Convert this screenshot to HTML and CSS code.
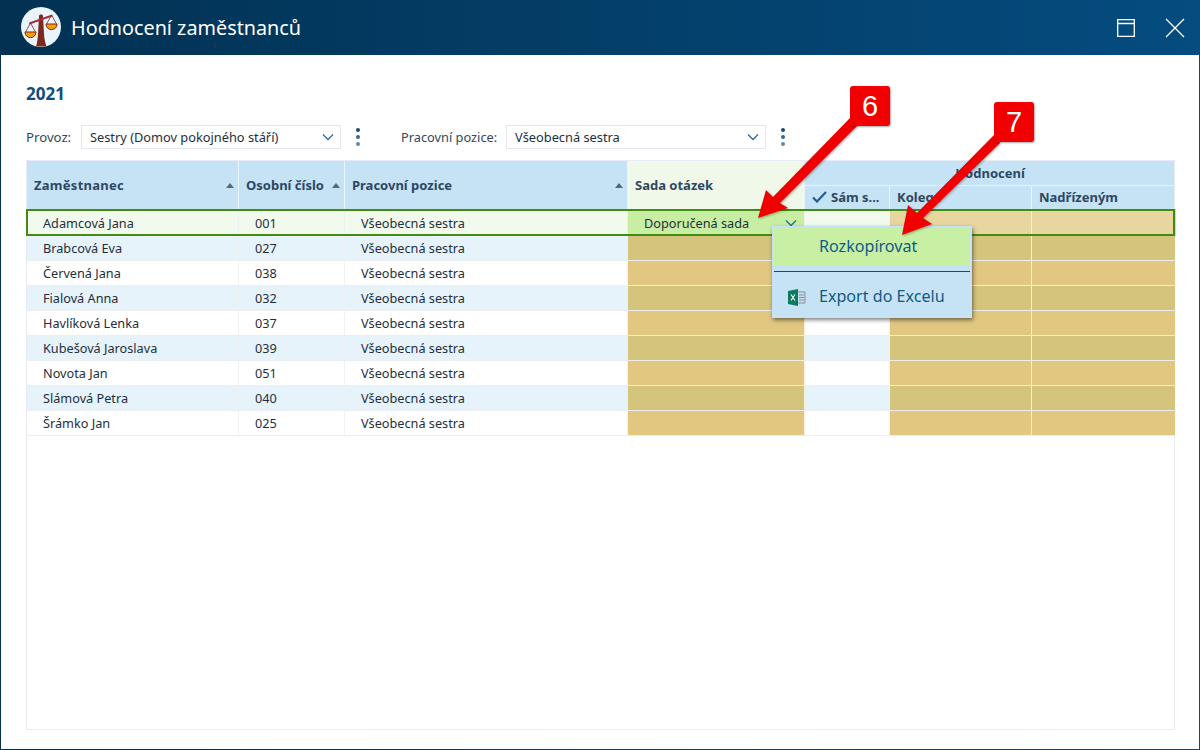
FILE: index.html
```html
<!DOCTYPE html>
<html lang="cs">
<head>
<meta charset="utf-8">
<title>Hodnocení zaměstnanců</title>
<link rel="stylesheet" href="styles.css">
</head>
<body>
<div class="window">
  <header class="titlebar">
    <svg class="logo" width="40" height="40" viewBox="0 0 40 40">
      <circle cx="20" cy="20" r="20" fill="#e9f4fb"/>
      <path d="M18 9 C18 7 22 7 22 9 L23 27 C23.500 33 24.500 37 25.500 39.500 L15 39.500 C16 37 16.500 33 17 27 Z" fill="#7a2a1e"/>
      <path d="M8 15.500 L31 7.500 L31.500 9.500 L8.500 17.500 Z" fill="#a82848"/>
      <path d="M9.500 16 L4.500 25 M9.500 16 L14.500 25 M30.500 8 L25.500 17 M30.500 8 L35.500 17" stroke="#7a2a1e" stroke-width=".8" fill="none"/>
      <path d="M4 25 H15 C15 32.500 4 32.500 4 25 Z" fill="#f59c00" stroke="#7a2a1e" stroke-width="1"/>
      <path d="M25 17 H36 C36 24.500 25 24.500 25 17 Z" fill="#f59c00" stroke="#7a2a1e" stroke-width="1"/>
    </svg>
    <h1 class="app-title">Hodnocení zaměstnanců</h1>
    <div class="win-controls">
      <svg width="18" height="18" viewBox="0 0 18 18" class="win-icon">
        <path d="M.7 .7H17.300V17.300H.7Z M.7 4.500H17.300" fill="none" stroke="#fff" stroke-width="1.300"/>
      </svg>
      <svg width="20" height="20" viewBox="0 0 20 20" class="win-icon">
        <path d="M1 1L19 19M19 1L1 19" fill="none" stroke="#fff" stroke-width="1.300"/>
      </svg>
    </div>
  </header>

  <main class="content">
    <h2 class="year">2021</h2>
    <div class="filters">
      <label class="filter-label label-provoz">Provoz:</label>
      <div class="select">
        <span>Sestry (Domov pokojného stáří)</span>
        <svg class="chev" width="12" height="8" viewBox="0 0 12 8"><path d="M1 1.500L6 6.500L11 1.500" fill="none" stroke="#2f6b96" stroke-width="1.300"/></svg>
      </div>
      <div class="dots"><i class="dot d1"></i><i class="dot d2"></i><i class="dot d3"></i></div>
      <label class="filter-label label-pozice">Pracovní pozice:</label>
      <div class="select">
        <span>Všeobecná sestra</span>
        <svg class="chev" width="12" height="8" viewBox="0 0 12 8"><path d="M1 1.500L6 6.500L11 1.500" fill="none" stroke="#2f6b96" stroke-width="1.300"/></svg>
      </div>
      <div class="dots"><i class="dot d1"></i><i class="dot d2"></i><i class="dot d3"></i></div>
    </div>

    <section class="table">
      <div class="thead">
        <div class="th th-span sortable"><span class="th-name">Zaměstnanec</span><i class="sort"></i></div>
        <div class="th th-span sortable">Osobní číslo<i class="sort"></i></div>
        <div class="th th-span sortable">Pracovní pozice<i class="sort"></i></div>
        <div class="th th-span th-green">Sada otázek</div>
        <div class="th th-group">Hodnocení</div>
        <div class="th th-sub">
          <svg class="check" width="15" height="12" viewBox="0 0 15 12"><path d="M1 6.500L5 10.500L14 1" fill="none" stroke="#1f5f92" stroke-width="2.200"/></svg>Sám s...
        </div>
        <div class="th th-sub">Kolega</div>
        <div class="th th-sub th-last">Nadřízeným</div>
      </div>

      <div class="row row-selected">
        <div class="td name">Adamcová Jana</div><div class="td">001</div><div class="td">Všeobecná sestra</div>
        <div class="td sada">Doporučená sada<svg class="chev" width="12" height="8" viewBox="0 0 12 8"><path d="M1 1.500L6 6.500L11 1.500" fill="none" stroke="#2f6b96" stroke-width="1.300"/></svg></div>
        <div class="td"></div><div class="td tan"></div><div class="td tan"></div>
      </div>
      <div class="row row-alt">
        <div class="td name">Brabcová Eva</div><div class="td">027</div><div class="td">Všeobecná sestra</div>
        <div class="td tan"></div><div class="td"></div><div class="td tan"></div><div class="td tan"></div>
      </div>
      <div class="row">
        <div class="td name">Červená Jana</div><div class="td">038</div><div class="td">Všeobecná sestra</div>
        <div class="td tan"></div><div class="td"></div><div class="td tan"></div><div class="td tan"></div>
      </div>
      <div class="row row-alt">
        <div class="td name">Fialová Anna</div><div class="td">032</div><div class="td">Všeobecná sestra</div>
        <div class="td tan"></div><div class="td"></div><div class="td tan"></div><div class="td tan"></div>
      </div>
      <div class="row">
        <div class="td name">Havlíková Lenka</div><div class="td">037</div><div class="td">Všeobecná sestra</div>
        <div class="td tan"></div><div class="td"></div><div class="td tan"></div><div class="td tan"></div>
      </div>
      <div class="row row-alt">
        <div class="td name">Kubešová Jaroslava</div><div class="td">039</div><div class="td">Všeobecná sestra</div>
        <div class="td tan"></div><div class="td"></div><div class="td tan"></div><div class="td tan"></div>
      </div>
      <div class="row">
        <div class="td name">Novota Jan</div><div class="td">051</div><div class="td">Všeobecná sestra</div>
        <div class="td tan"></div><div class="td"></div><div class="td tan"></div><div class="td tan"></div>
      </div>
      <div class="row row-alt">
        <div class="td name">Slámová Petra</div><div class="td">040</div><div class="td">Všeobecná sestra</div>
        <div class="td tan"></div><div class="td"></div><div class="td tan"></div><div class="td tan"></div>
      </div>
      <div class="row">
        <div class="td name">Šrámko Jan</div><div class="td">025</div><div class="td">Všeobecná sestra</div>
        <div class="td tan"></div><div class="td"></div><div class="td tan"></div><div class="td tan"></div>
      </div>
    </section>
  </main>

  <nav class="menu">
    <div class="menu-item menu-active">Rozkopírovat</div>
    <div class="menu-sep"></div>
    <div class="menu-item">
      <svg class="xl" width="18" height="17" viewBox="0 0 18 17">
        <path d="M10 3H17V14H10" fill="none" stroke="#8a8a96" stroke-width="1"/>
        <path d="M11 6H16M11 8.500H16M11 11H16" stroke="#8a8a96" stroke-width="1"/>
        <path d="M0 2L10 0V17L0 15Z" fill="#0e7a5c"/>
        <path d="M3 5.500L7 11.500M7 5.500L3 11.500" stroke="#fff" stroke-width="1.100"/>
      </svg>Export do Excelu
    </div>
  </nav>

  <svg class="arrows" width="1200" height="750" viewBox="0 0 1200 750">
    <polygon points="850,118 857,126 780,203 788,208 758,218 766,190 773,197" fill="#f00000"/>
    <polygon points="994,135 1000,143 923,218 932,224 902,235 908,205 917,213" fill="#f00000"/>
  </svg>
  <div class="badge badge-6">6</div>
  <div class="badge badge-7">7</div>
</div>
</body>
</html>
```

FILE: styles.css
```css
* { box-sizing: border-box; }
html, body { margin: 0; padding: 0; height: 100%; }
body { font-family: "Noto Sans", "Open Sans", sans-serif; overflow: hidden; }

.window {
  position: relative;
  width: 1200px;
  height: 750px;
  display: flex;
  flex-direction: column;
  padding: 0 1px 1px;
  background: linear-gradient(90deg, #023152 0%, #054c7f 100%);
}

.titlebar {
  height: 55px;
  flex: none;
  display: flex;
  align-items: center;
  padding: 0 14px 0 20px;
  color: #fff;
}
.logo { flex: none; margin-top: -1px; }
.app-title { margin: 0 0 0 10px; font-size: 19.800px; font-weight: 400; flex: 1; }
.win-controls { display: flex; align-items: center; gap: 30px; }
.win-icon { display: block; }

.content {
  flex: 1;
  background: #fff;
  padding: 25px 24px 19px 25px;
  display: flex;
  flex-direction: column;
  color: #23384a;
}
.year { margin: 0; font-size: 17px; line-height: 27px; font-weight: 700; color: #0f4f7c; }
.filters {
  display: flex;
  align-items: center;
  height: 24px;
  margin-top: 18px;
  font-size: 12.800px;
}
.filter-label { color: #33495c; font-size: 12.800px; }
.label-provoz { width: 55px; font-size: 13.200px; }
.label-pozice { width: 105px; margin-left: 40px; }
.select {
  width: 260px;
  height: 24px;
  border: 1px solid #e3e7f3;
  display: flex;
  align-items: center;
  justify-content: space-between;
  padding: 0 6px 0 8px;
  color: #1d2f3e;
}
.dots {
  width: 6px;
  margin-left: 14px;
  display: flex;
  flex-direction: column;
  gap: 3px;
  align-items: center;
}
.dot { width: 4px; height: 4px; border-radius: 50%; display: block; }
.d1 { background: #0f4f7c; }
.d2 { background: #33688f; }
.d3 { background: #5f8aa8; }

.table {
  flex: 1;
  margin-top: 11px;
  border: 1px solid #e8ebf5;
  background: #fff;
}
.thead, .row {
  display: grid;
  grid-template-columns: 212px 106px 283px 177px 85px 142px 143px;
}
.thead { grid-template-rows: 25px 23px; height: 48px; background: #c6e3f5; }
.th {
  font-size: 13px;
  font-weight: 700;
  color: #2d4763;
  display: flex;
  align-items: center;
  padding-left: 7px;
  border-right: 1px solid #e9f3fa;
}
.th-name { letter-spacing: .27px; }
.th-span { grid-row: 1 / span 2; }
.sortable { justify-content: space-between; padding-right: 4px; }
.sort {
  width: 0;
  height: 0;
  border-left: 4.500px solid transparent;
  border-right: 4.500px solid transparent;
  border-bottom: 5px solid #5a6672;
}
.th-green { background: #f0f9e9; }
.th-group {
  grid-column: 5 / span 3;
  justify-content: center;
  border-right: 0;
  border-bottom: 1px solid #e9f3fa;
  padding: 0;
}
.th-sub { padding-left: 7px; padding-bottom: 2px; }
.th-sub:first-of-type { padding-left: 8px; }
.th-last { border-right: 0; }
.check { margin-right: 4px; flex: none; }

.row { height: 25px; border-bottom: 1px solid #eceef0; }
.row-alt { background: #e6f3fb; }
.row-selected {
  position: relative;
  height: 27px;
  background: #f2f9ed;
  border-bottom: 0;
  margin-left: -1px;
  margin-right: -1px;
  grid-template-columns: 213px 106px 283px 177px 85px 142px 144px;
}
.row-selected::after {
  content: "";
  position: absolute;
  inset: 0;
  border: 2px solid #438c13;
  pointer-events: none;
}
.td {
  font-size: 12.700px;
  color: #1f2f3d;
  display: flex;
  align-items: center;
  padding-left: 16px;
  border-right: 1px solid #eef1f3;
}
.td:last-child { border-right: 0; }
.row-selected .td { padding-top: 1px; }
.row-selected .name { padding-left: 17px; }
.tan { background: #e1c780; border-right-color: #f5efdc; }
.row-alt .tan { background: #d4c47c; }
.row-selected .tan { background: #e7d69f; }
.sada { background: #c7eea2; justify-content: space-between; padding-right: 7px; }

.menu {
  position: absolute;
  left: 772px;
  top: 226px;
  width: 200px;
  height: 92px;
  background: #c6e3f5;
  padding: 1px 2px 0;
  box-shadow: 1px 2px 4px rgba(0, 0, 0, .5);
  display: flex;
  flex-direction: column;
}
.menu-item {
  height: 39px;
  flex: none;
  display: flex;
  align-items: center;
  padding: 0 0 2px 45px;
  font-size: 16.100px;
  color: #0f5a85;
  position: relative;
}
.menu-active { background: #c7f0a4; }
.menu-sep { height: 1px; background: #0c4f7c; margin-top: 5px; margin-bottom: 5px; flex: none; }
.menu-item:last-child { height: 41px; padding-bottom: 3px; }
.xl { position: absolute; left: 14px; top: 12px; }

.arrows {
  position: absolute;
  left: 0;
  top: 0;
  pointer-events: none;
  filter: drop-shadow(1px 1px 1px rgba(0, 0, 0, .3));
}
.badge {
  position: absolute;
  width: 40px;
  height: 40px;
  background: #f00000;
  border-radius: 3px;
  color: #fff;
  font-family: "Liberation Sans", Arial, sans-serif;
  font-size: 29px;
  line-height: 40px;
  text-align: center;
  box-shadow: 1px 1px 2px rgba(0, 0, 0, .35);
}
.badge-6 { left: 850px; top: 86px; }
.badge-7 { left: 994px; top: 102px; }
```
